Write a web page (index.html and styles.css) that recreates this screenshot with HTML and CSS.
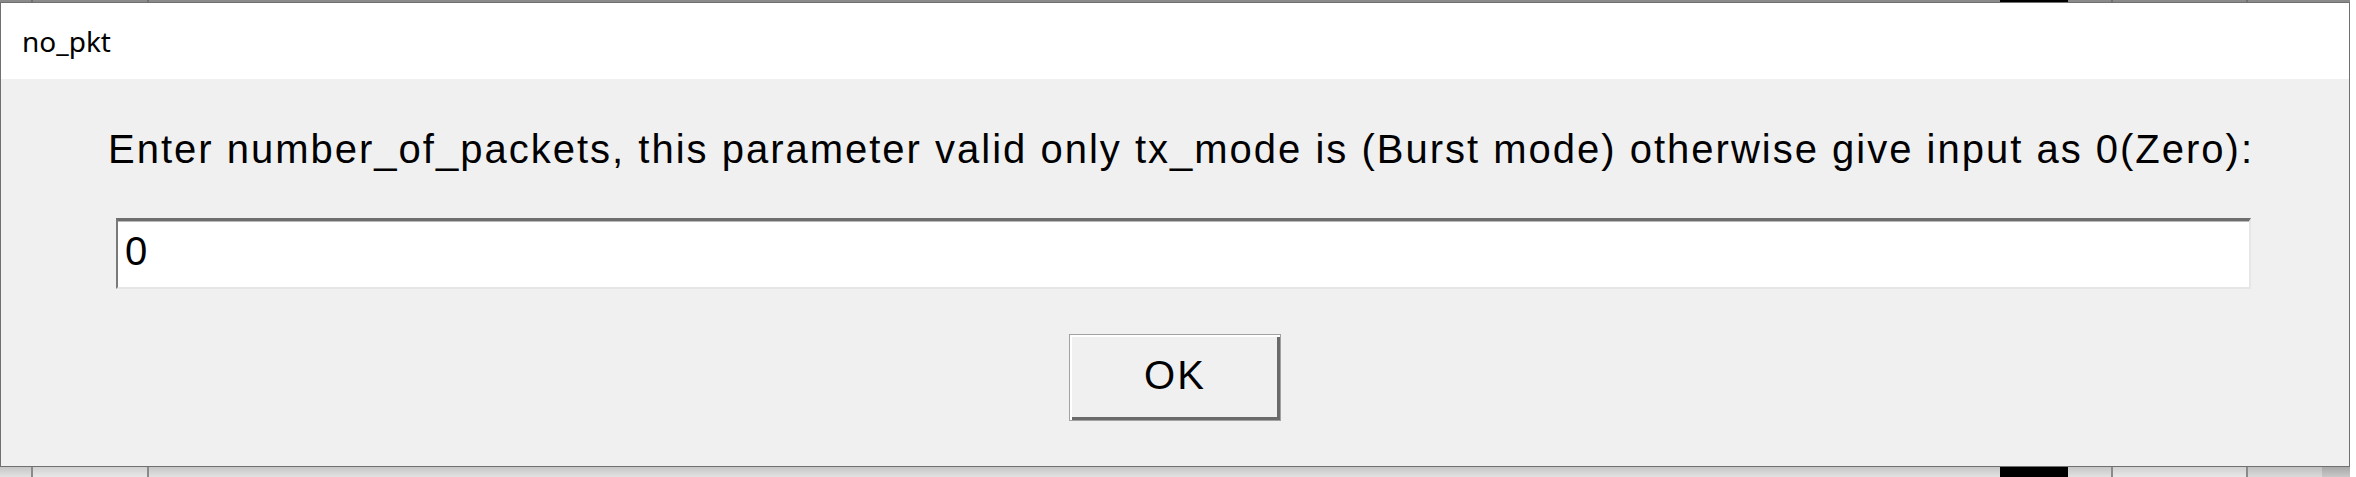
FILE: index.html
```html
<!DOCTYPE html>
<html>
<head>
<meta charset="utf-8">
<title>no_pkt</title>
<link rel="stylesheet" href="styles.css">
</head>
<body>
<div class="desktop">
  <div class="strip strip-top">
    <span class="seg seg-a"></span><span class="seg seg-line"></span><span class="seg seg-b"></span><span class="seg seg-line"></span><span class="seg seg-fill"></span><span class="seg seg-black"></span><span class="seg seg-b2"></span><span class="seg seg-line"></span><span class="seg seg-c"></span><span class="seg seg-line"></span><span class="seg seg-d"></span><span class="seg seg-end"></span>
  </div>
  <div class="window">
    <div class="titlebar">no_pkt</div>
    <div class="content">
      <div class="message">Enter number_of_packets, this parameter valid only tx_mode is (Burst mode) otherwise give input as 0(Zero):</div>
      <input class="entry" type="text" value="0">
      <button class="ok-button" type="button">OK</button>
    </div>
  </div>
  <div class="strip strip-bottom">
    <span class="seg seg-a"></span><span class="seg seg-line"></span><span class="seg seg-b"></span><span class="seg seg-line"></span><span class="seg seg-fill"></span><span class="seg seg-black"></span><span class="seg seg-b2"></span><span class="seg seg-line"></span><span class="seg seg-c"></span><span class="seg seg-line"></span><span class="seg seg-d"></span><span class="seg seg-end"></span>
  </div>
</div>
</body>
</html>
```

FILE: styles.css
```css
html, body {
  margin: 0;
  padding: 0;
  background: #ffffff;
}

.desktop {
  width: 2356px;
  height: 477px;
  display: flex;
  flex-direction: column;
  overflow: hidden;
  background: #ffffff;
}

.strip {
  display: flex;
  width: 2350px;
  flex: none;
}

.strip-top {
  height: 2px;
}

.strip-bottom {
  height: 10px;
}

.seg {
  display: block;
  height: 100%;
}

.strip-top .seg { background: #8a8a8a; }
.strip-top .seg-line { background: #707070; }
.strip-top .seg-black { background: #000000; }

.strip-bottom .seg { background: linear-gradient(#c6c6c6, #e2e2e2); }
.strip-bottom .seg-line { background: #8a8a8a; }
.strip-bottom .seg-black { background: #000000; }
.strip-bottom .seg-b,
.strip-bottom .seg-c { background: linear-gradient(#d0d0d0, #e8e8e8); }
.strip-bottom .seg-d { background: linear-gradient(#c0c0c0, #dadada); }
.strip-bottom .seg-end { background: linear-gradient(#a8a8a8, #c8c8c8); }

.seg-a { width: 31px; }
.seg-line { width: 2px; }
.seg-b { width: 114px; }
.seg-fill { flex: 1; }
.seg-black { width: 68px; }
.seg-b2 { width: 43px; }
.seg-c { width: 133px; }
.seg-d { width: 74px; }
.seg-end { width: 28px; }

.window {
  width: 2350px;
  box-sizing: border-box;
  border: 1px solid #707070;
  display: flex;
  flex-direction: column;
  flex: none;
  height: 465px;
}

.titlebar {
  height: 76px;
  line-height: 76px;
  background: #ffffff;
  padding-left: 21px;
  font-family: "Noto Sans", "Open Sans", sans-serif;
  font-size: 28px;
  color: #000000;
  flex: none;
}

.content {
  flex: 1;
  background: #f0f0f0;
  display: flex;
  flex-direction: column;
  padding: 47px 0 0 0;
}

.message {
  height: 46px;
  line-height: 46px;
  padding-left: 107px;
  font-family: "Liberation Sans", Arial, sans-serif;
  font-size: 40px;
  letter-spacing: 2px;
  color: #000000;
  white-space: nowrap;
}

.entry {
  margin: 46px 0 0 115px;
  width: 2135px;
  height: 71px;
  box-sizing: border-box;
  border-style: solid;
  border-width: 3px 2px 2px 2px;
  border-color: #6e6e6e #e6e6e6 #e6e6e6 #7a7a7a;
  box-shadow: inset 0 1px 0 #b8b8b8;
  background: #ffffff;
  padding: 0 0 6px 7px;
  font-family: "Liberation Sans", Arial, sans-serif;
  font-size: 40px;
  color: #000000;
  outline: none;
}

.ok-button {
  margin-top: 45px;
  align-self: center;
  width: 212px;
  height: 87px;
  box-sizing: border-box;
  border: 1px solid #a2a2a2;
  box-shadow: inset 2px 2px 0 #ffffff, inset -3px -3px 0 #6a6a6a;
  background: #f0f0f0;
  padding: 0 0 4px 0;
  font-family: "Liberation Sans", Arial, sans-serif;
  font-size: 40px;
  letter-spacing: 2px;
  color: #000000;
}
```
